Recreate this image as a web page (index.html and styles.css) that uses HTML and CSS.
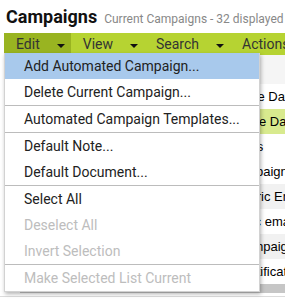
FILE: index.html
```html
<!DOCTYPE html>
<html lang="en">
  <head>
    <meta charset="UTF-8" />
    <meta name="viewport" content="width=device-width, initial-scale=1.0" />
    <title>Campaigns</title>
    <link rel="stylesheet" href="styles.css">
  </head>
  <body>
    <div class="page-head">
      <h1>Campaigns</h1>
      <span class="count">Current Campaigns - 32 displayed</span>
    </div>

    <!-- Menu bar -->
    <div class="menubar">
      <div class="menu-btn active">Edit<span class="caret"></span></div>
      <div class="menu-btn">View<span class="caret"></span></div>
      <div class="menu-btn">Search<span class="caret"></span></div>
      <div class="menu-btn">Actions<span class="caret"></span></div>
    </div>

    <!-- Campaign list (mostly behind the open menu) -->
    <div class="list">
      <div class="list-head"></div>
      <div class="row"><span class="cell">03/12/2019</span><span class="cell">Close Due Date</span></div>
      <div class="row selected"><span class="cell">03/12/2019</span><span class="cell">Policy Due Date</span></div>
      <div class="row"><span class="cell">04/02/2019</span><span class="cell">Old Leads</span></div>
      <div class="row"><span class="cell">04/18/2019</span><span class="cell">Fall Campaign</span></div>
      <div class="row alt"><span class="cell">05/01/2019</span><span class="cell">My Generic Email</span></div>
      <div class="row"><span class="cell">05/07/2019</span><span class="cell">A Generic email</span></div>
      <div class="row alt"><span class="cell">06/10/2019</span><span class="cell">Main Campaign</span></div>
      <div class="row"><span class="cell">06/22/2019</span><span class="cell">Email Notification</span></div>
      <div class="scrollbar"></div>
    </div>
    <div class="page-foot"></div>

    <!-- Open Edit menu -->
    <div class="dropdown">
      <div class="item hover">Add Automated Campaign...</div>
      <div class="item">Delete Current Campaign...</div>
      <div class="sep"></div>
      <div class="item">Automated Campaign Templates...</div>
      <div class="sep"></div>
      <div class="item">Default Note...</div>
      <div class="item">Default Document...</div>
      <div class="sep"></div>
      <div class="item">Select All</div>
      <div class="item disabled">Deselect All</div>
      <div class="item disabled">Invert Selection</div>
      <div class="sep"></div>
      <div class="item disabled">Make Selected List Current</div>
    </div>
  </body>
</html>
```

FILE: styles.css
```css
body {
  margin: 0;
  font-family: Roboto, "Liberation Sans", sans-serif;
  background: #fff;
  color: #222;
  overflow: hidden;
}

.page-head {
  display: flex;
  align-items: baseline;
  height: 33px;
  box-sizing: border-box;
  padding: 8px 6px 0;
  white-space: nowrap;
}

.page-head h1 {
  margin: 0;
  font-size: 18px;
  line-height: 18px;
  font-weight: 700;
  color: #111;
}

.page-head .count {
  margin-left: 7px;
  font-size: 12px;
  color: #888;
}

.menubar {
  display: flex;
  margin-left: 4px;
  height: 22px;
  box-sizing: border-box;
  background: #b6d332;
  font-size: 14px;
  line-height: 21px;
  color: #333;
  white-space: nowrap;
}

.menu-btn {
  display: flex;
  align-items: center;
  padding: 1px 6px 0 12px;
}

.menu-btn.active {
  background: #99b421;
}

.caret {
  width: 0;
  height: 0;
  margin: 2px 0 0 17px;
  border-left: 4px solid transparent;
  border-right: 4px solid transparent;
  border-top: 4px solid #111;
}

.list {
  margin-left: 20px;
  font-family: "Liberation Sans", Arial, sans-serif;
  font-size: 13px;
  color: #000;
}

.list-head {
  height: 29px;
  background: #f5f5f5;
}

.row {
  display: grid;
  grid-template-columns: 184px 1fr;
  height: 25px;
  line-height: 25px;
  white-space: nowrap;
  overflow: hidden;
}

.row.alt {
  background: #f1f1f1;
}

.row.selected {
  background: #d8ea8e;
}

.scrollbar {
  height: 9px;
  background: #c6c6c6;
}

.page-foot {
  margin-top: 3px;
  border-top: 1px solid #dcdcdc;
}

.dropdown {
  position: absolute;
  top: 53px;
  left: 4px;
  width: 256px;
  box-sizing: border-box;
  background: #fff;
  border: 1px solid #d2d2d2;
  border-top: none;
  box-shadow: 1px 2px 4px rgba(0, 0, 0, 0.3);
  font-size: 14px;
}

.dropdown .item {
  height: 26px;
  line-height: 26px;
  padding-left: 19px;
  color: #222;
  white-space: nowrap;
}

.dropdown .item.hover {
  background: #a8c9ec;
}

.dropdown .item.disabled {
  color: #bdbdbd;
}

.dropdown .sep {
  height: 1px;
  background: #bcbcbc;
}
```
